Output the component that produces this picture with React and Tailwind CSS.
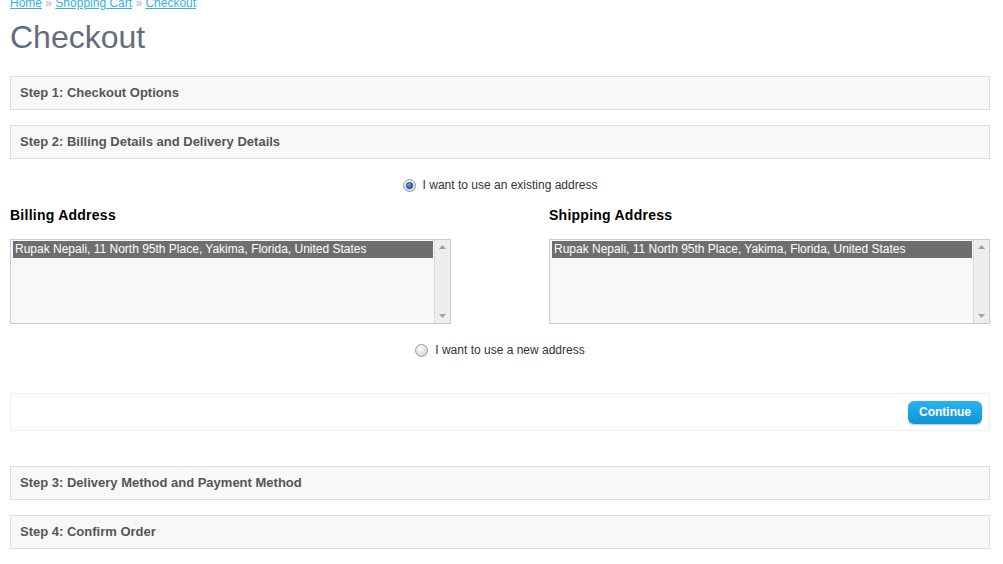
import React from 'react';

const font = { fontFamily: '"Liberation Sans", Arial, sans-serif' };

const StepHeader = ({ title, className = '' }) => (
    <div className={`h-[34px] flex items-center px-[9px] bg-[#f8f8f8] border border-[#dddddd] ${className}`}>
        <span className="text-[13px] font-bold text-[#555555]">{title}</span>
    </div>
);

const Radio = ({ checked }) => (
    <svg width="13" height="13" viewBox="0 0 13 13" className="shrink-0">
        <defs>
            <radialGradient id="rg" cx="40%" cy="35%" r="65%">
                <stop offset="0%" stopColor="#ffffff" />
                <stop offset="100%" stopColor="#d4d4d4" />
            </radialGradient>
            <radialGradient id="dot" cx="40%" cy="35%" r="70%">
                <stop offset="0%" stopColor="#6aa8f0" />
                <stop offset="100%" stopColor="#1a3f9a" />
            </radialGradient>
        </defs>
        <circle cx="6.5" cy="6.5" r="6" fill="url(#rg)" stroke="#9a9a9a" strokeWidth="1" />
        {checked && <circle cx="6.5" cy="6.5" r="3.2" fill="url(#dot)" stroke="#183a82" strokeWidth="0.6" />}
    </svg>
);

const RadioRow = ({ checked, label, className = '' }) => (
    <div className={`flex justify-center items-center gap-[7px] h-[18px] ${className}`}>
        <Radio checked={checked} />
        <span className="text-[12px] text-[#333333]">{label}</span>
    </div>
);

const AddressBox = () => (
    <div className="h-[85px] border border-[#cccccc] bg-[#f8f8f8] flex">
        <div className="flex-1 p-[1px] pl-[2px]">
            <div className="bg-[#6e6e6e] text-white text-[12px] leading-[17px] px-[2px] h-[17px]">
                Rupak Nepali, 11 North 95th Place, Yakima, Florida, United States
            </div>
        </div>
        <div className="w-[16px] bg-[#eeeeee] border-l border-dotted border-[#c8c8c8] flex flex-col justify-between items-center py-[5px]">
            <svg width="7" height="4" viewBox="0 0 7 4"><path d="M0 4 L3.5 0 L7 4 Z" fill="#a0a0a0" /></svg>
            <svg width="7" height="4" viewBox="0 0 7 4"><path d="M0 0 L3.5 4 L7 0 Z" fill="#a0a0a0" /></svg>
        </div>
    </div>
);

export default function App() {
    return (
        <div className="w-[1003px] h-[564px] overflow-hidden bg-white" style={font}>
            <div className="px-[10px] w-[1000px]">
                <div className="-mt-[6px] text-[12px] leading-[18px] text-[#38b0e3]">
                    <a className="underline">Home</a>
                    <span className="text-[#b5b5b5]"> » </span>
                    <a className="underline">Shopping Cart</a>
                    <span className="text-[#b5b5b5]"> » </span>
                    <a className="underline">Checkout</a>
                </div>
                <h1 className="mt-[6px] text-[32px] leading-[38px] text-[#636e7b] font-normal mb-[20px]">Checkout</h1>

                <StepHeader title="Step 1: Checkout Options" />
                <StepHeader title="Step 2: Billing Details and Delivery Details" className="mt-[15px]" />

                <RadioRow checked label="I want to use an existing address" className="mt-[17px]" />

                <div className="flex justify-between mt-[12px]">
                    <div className="w-[45%]">
                        <h2 className="text-[14px] leading-[18px] font-bold text-black tracking-[0.25px]">Billing Address</h2>
                        <div className="mt-[15px]"><AddressBox /></div>
                    </div>
                    <div className="w-[45%]">
                        <h2 className="text-[14px] leading-[18px] font-bold text-black tracking-[0.25px]">Shipping Address</h2>
                        <div className="mt-[15px]"><AddressBox /></div>
                    </div>
                </div>

                <RadioRow label="I want to use a new address" className="mt-[17px]" />

                <div className="mt-[34px] h-[38px] border border-[#eeeeee] flex items-center justify-end pr-[7px]">
                    <button className="h-[23px] w-[74px] rounded-[6px] bg-gradient-to-b from-[#26b4ee] to-[#1293d8] text-white text-[12px] font-bold shadow-[0_1px_2px_rgba(0,0,0,0.25)]">
                        Continue
                    </button>
                </div>

                <StepHeader title="Step 3: Delivery Method and Payment Method" className="mt-[35px]" />
                <StepHeader title="Step 4: Confirm Order" className="mt-[15px]" />
            </div>
        </div>
    );
}
